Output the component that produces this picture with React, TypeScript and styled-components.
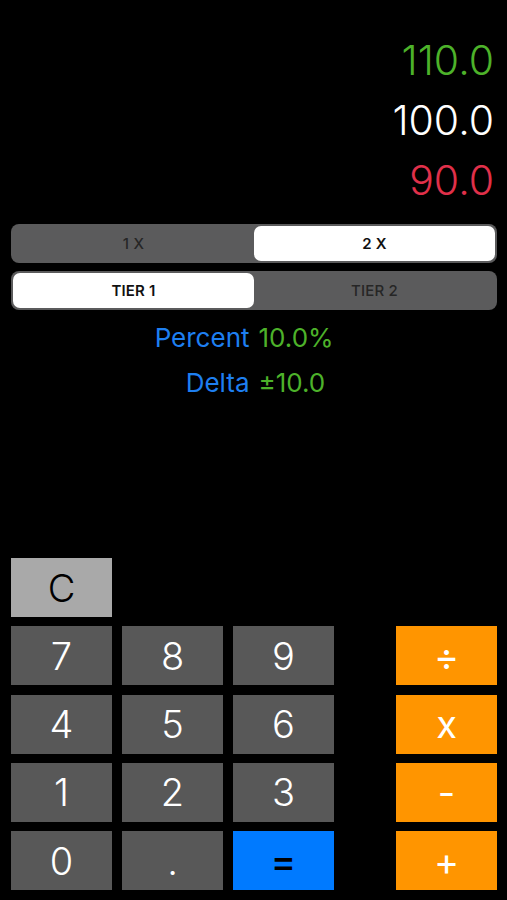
import styled, { createGlobalStyle } from "styled-components";

const GlobalStyle = createGlobalStyle`
  html, body {
    margin: 0;
    padding: 0;
    background: #000;
  }
  body {
    font-family: Inter, "Liberation Sans", sans-serif;
  }
`;

const Screen = styled.div`
  width: 507px;
  height: 900px;
  box-sizing: border-box;
  padding: 0 10px 10px 11px;
  display: flex;
  flex-direction: column;
  background: #000;
`;

const Display = styled.div`
  display: flex;
  flex-direction: column;
  align-items: flex-end;
  padding: 30px 3px 0 0;
  margin-bottom: 14px;
`;

const Reading = styled.div<{ $color: string }>`
  font-size: 41px;
  line-height: 60px;
  font-weight: 300;
  color: ${(p) => p.$color};
`;

const Segmented = styled.div`
  display: grid;
  grid-template-columns: 1fr 1fr;
  height: 39px;
  padding: 2px;
  box-sizing: border-box;
  background: #5b5b5c;
  border-radius: 8px;
  margin-bottom: 8px;
`;

const Segment = styled.div<{ $active: boolean }>`
  display: flex;
  align-items: center;
  justify-content: center;
  border-radius: 7px;
  font-size: 15px;
  letter-spacing: 0.2px;
  font-weight: ${(p) => (p.$active ? 600 : 500)};
  color: ${(p) => (p.$active ? "#111" : "#262626")};
  background: ${(p) => (p.$active ? "#fff" : "transparent")};
`;

const Info = styled.div`
  display: grid;
  grid-template-columns: 1fr 1fr;
  column-gap: 9px;
  margin-top: -3px;
  font-size: 26px;
  line-height: 45px;
`;

const Label = styled.div`
  text-align: right;
  color: #1e7ff0;
`;

const Value = styled.div`
  text-align: left;
  color: #4db22a;
`;

const Keypad = styled.div`
  margin-top: auto;
  display: grid;
  grid-template-columns: 101px 101px 101px 1fr 101px;
  grid-auto-rows: 59px;
  column-gap: 10px;
  row-gap: 9.25px;
`;

type Tone = "digit" | "clear" | "op" | "equals";

const toneBg: Record<Tone, string> = {
  digit: "#585858",
  clear: "#a9a9a9",
  op: "#ff9500",
  equals: "#007aff",
};

const toneFg: Record<Tone, string> = {
  digit: "#fff",
  clear: "#000",
  op: "#fff",
  equals: "#000",
};

const toneWeight: Record<Tone, number> = {
  digit: 300,
  clear: 300,
  op: 400,
  equals: 500,
};

const Key = styled.button<{ $tone: Tone; $col: number }>`
  grid-column: ${(p) => p.$col};
  border: none;
  margin: 0;
  padding: 0;
  display: flex;
  align-items: center;
  justify-content: center;
  font-family: Inter, "Liberation Sans", sans-serif;
  font-size: 38px;
  font-weight: ${(p) => toneWeight[p.$tone]};
  background: ${(p) => toneBg[p.$tone]};
  color: ${(p) => toneFg[p.$tone]};
`;

const rows: { label: string; tone: Tone; col: number }[][] = [
  [{ label: "C", tone: "clear", col: 1 }],
  [
    { label: "7", tone: "digit", col: 1 },
    { label: "8", tone: "digit", col: 2 },
    { label: "9", tone: "digit", col: 3 },
    { label: "÷", tone: "op", col: 5 },
  ],
  [
    { label: "4", tone: "digit", col: 1 },
    { label: "5", tone: "digit", col: 2 },
    { label: "6", tone: "digit", col: 3 },
    { label: "x", tone: "op", col: 5 },
  ],
  [
    { label: "1", tone: "digit", col: 1 },
    { label: "2", tone: "digit", col: 2 },
    { label: "3", tone: "digit", col: 3 },
    { label: "-", tone: "op", col: 5 },
  ],
  [
    { label: "0", tone: "digit", col: 1 },
    { label: ".", tone: "digit", col: 2 },
    { label: "=", tone: "equals", col: 3 },
    { label: "+", tone: "op", col: 5 },
  ],
];

export default function App() {
  return (
    <>
      <GlobalStyle />
      <Screen>
        <Display>
          <Reading $color="#4db22a">110.0</Reading>
          <Reading $color="#ffffff">100.0</Reading>
          <Reading $color="#e0304a">90.0</Reading>
        </Display>
        <Segmented>
          <Segment $active={false}>1 X</Segment>
          <Segment $active={true}>2 X</Segment>
        </Segmented>
        <Segmented>
          <Segment $active={true}>TIER 1</Segment>
          <Segment $active={false}>TIER 2</Segment>
        </Segmented>
        <Info>
          <Label>Percent</Label>
          <Value>10.0%</Value>
          <Label>Delta</Label>
          <Value>±10.0</Value>
        </Info>
        <Keypad>
          {rows.map((row, r) =>
            row.map((k) => (
              <Key key={`${r}-${k.label}`} $tone={k.tone} $col={k.col} style={{ gridRow: r + 1 }}>
                {k.label}
              </Key>
            ))
          )}
        </Keypad>
      </Screen>
    </>
  );
}
